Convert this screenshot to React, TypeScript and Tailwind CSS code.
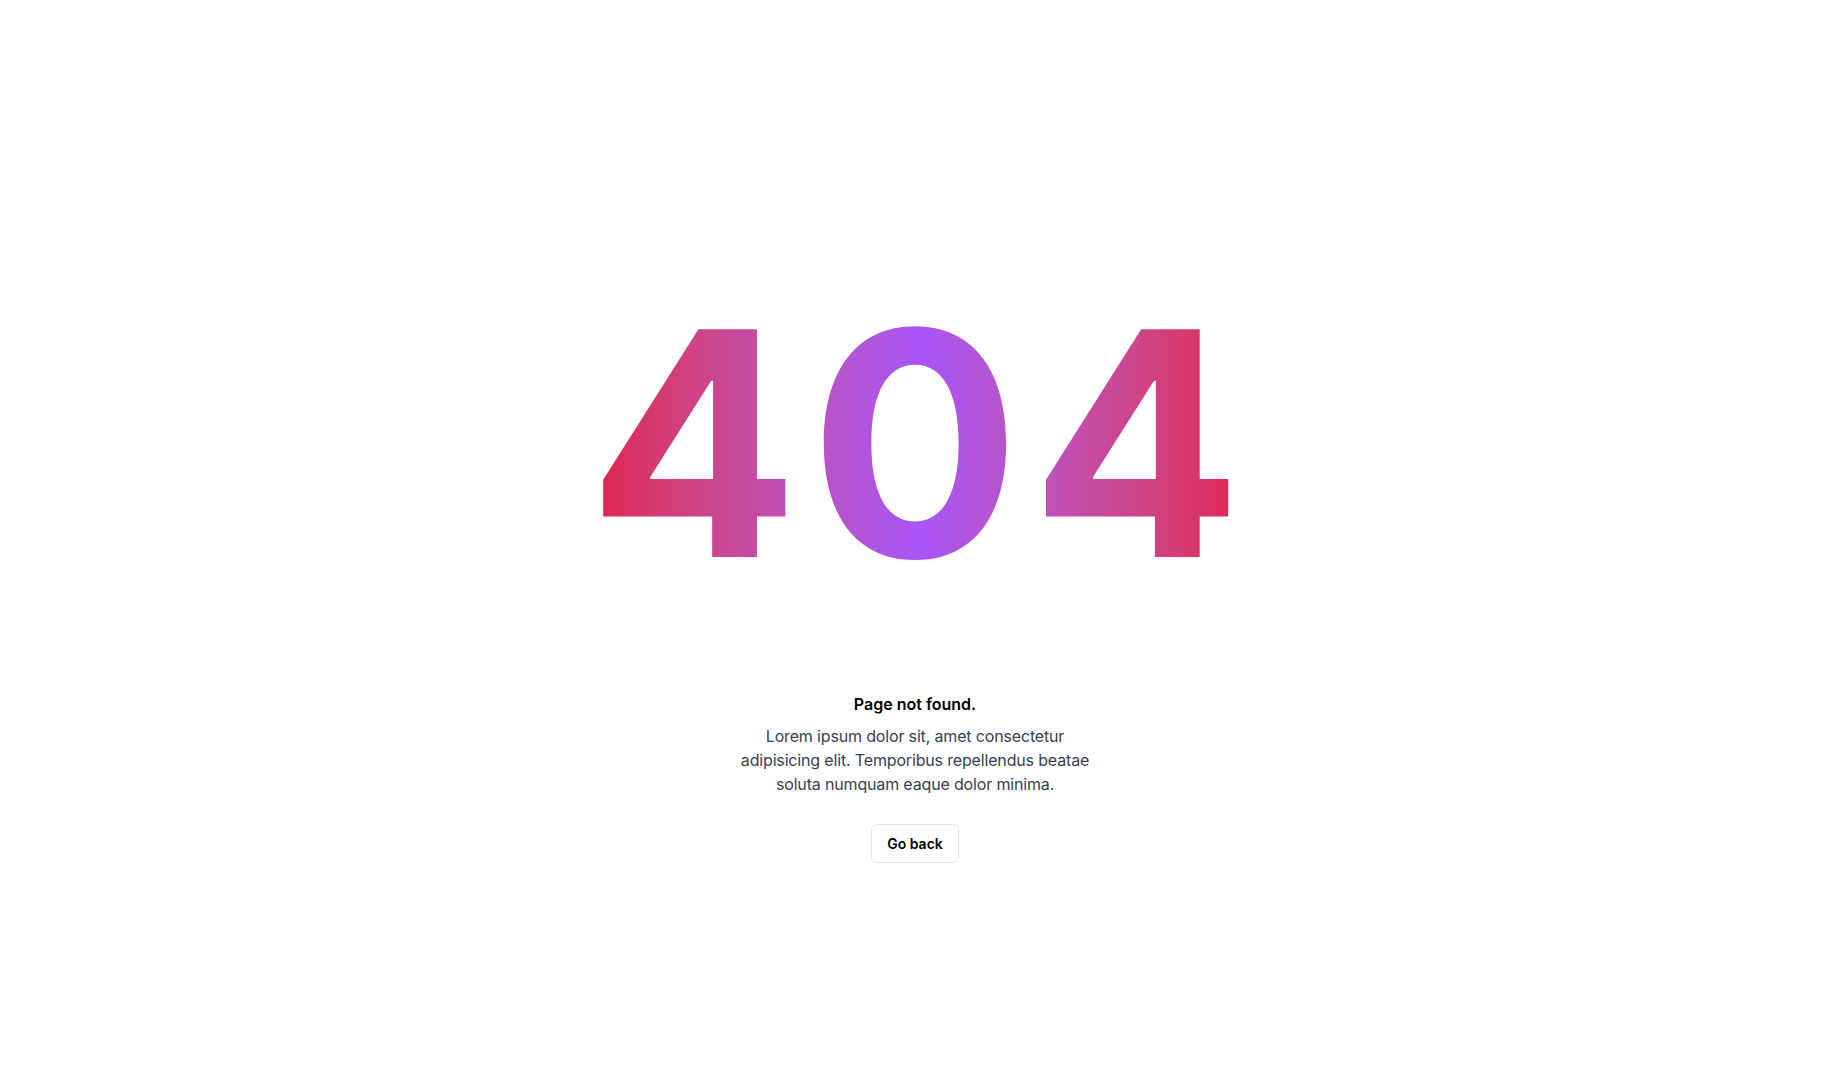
export default function App() {
  return (
    <main className="min-h-screen bg-white flex flex-col items-center pt-[287px] font-['Inter',sans-serif]">
      <h1 className="ml-[10px] inline-block text-[313px] leading-none font-bold tracking-[0.032em] bg-gradient-to-r from-[#e11d48] via-[#a855f7] to-[#e11d48] bg-clip-text text-transparent select-none">
        404
      </h1>
      <div className="mt-[92px] flex flex-col items-center text-center">
        <p className="text-base font-semibold text-black">Page not found.</p>
        <p className="mt-2 max-w-[360px] text-base leading-6 tracking-[-0.01em] text-gray-700">
          Lorem ipsum dolor sit, amet consectetur adipisicing elit. Temporibus repellendus beatae soluta numquam eaque dolor minima.
        </p>
        <button className="mt-[28px] h-[39px] rounded-md border border-gray-200 bg-white px-[15px] text-sm font-semibold text-black">
          Go back
        </button>
      </div>
    </main>
  );
}
